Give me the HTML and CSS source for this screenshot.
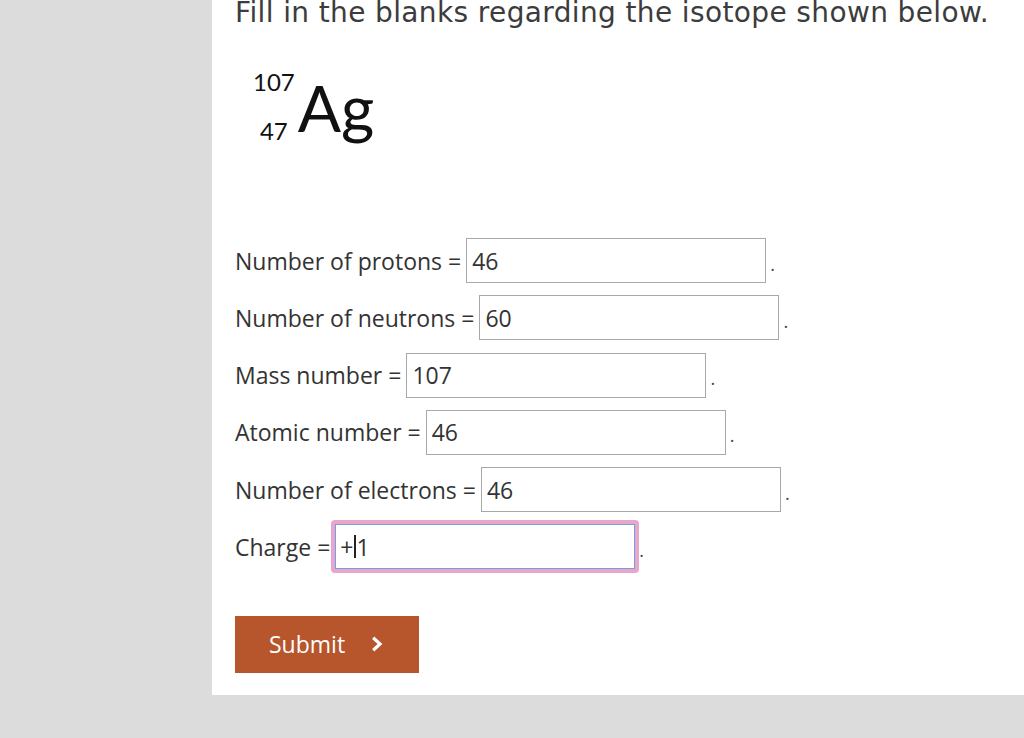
FILE: index.html
```html
<!DOCTYPE html>
<html lang="en">
<head>
<meta charset="utf-8">
<title>Isotope question</title>
<link rel="stylesheet" href="styles.css">
</head>
<body>
<main class="panel">
  <h1 class="title">Fill in the blanks regarding the isotope shown below.</h1>
  <div class="nuclide">
    <div class="indices">
      <span class="mass">107</span>
      <span class="atomic">47</span>
    </div>
    <span class="symbol">Ag</span>
  </div>
  <form class="blanks">
    <div class="row"><span class="label">Number of protons =</span><input class="field" type="text" value="46"><span class="dot">.</span></div>
    <div class="row"><span class="label">Number of neutrons =</span><input class="field" type="text" value="60"><span class="dot">.</span></div>
    <div class="row"><span class="label">Mass number =</span><input class="field" type="text" value="107"><span class="dot">.</span></div>
    <div class="row"><span class="label">Atomic number =</span><input class="field" type="text" value="46"><span class="dot">.</span></div>
    <div class="row"><span class="label">Number of electrons =</span><input class="field" type="text" value="46"><span class="dot">.</span></div>
    <div class="row"><span class="label">Charge =</span><span class="ring"><span class="field focused">+<span class="caret"></span>1</span></span><span class="dot">.</span></div>
    <button class="submit" type="button">Submit
      <svg class="chev" width="12" height="16" viewBox="0 0 12 16"><path d="M2.2 1.8 L9 8 L2.2 14.2" fill="none" stroke="#fff" stroke-width="3.2"/></svg>
    </button>
  </form>
</main>
</body>
</html>
```
FILE: styles.css
```css
html, body {
  margin: 0;
  padding: 0;
}
body {
  background: #dcdcdc;
  height: 738px;
  overflow: hidden;
  font-family: "Open Sans", "Liberation Sans", sans-serif;
  color: #333;
}
.panel {
  margin-left: 212px;
  width: 812px;
  height: 695px;
  background: #fff;
  padding-left: 23px;
  box-sizing: border-box;
  overflow: hidden;
}
.title {
  margin: -4px 0 0 0;
  font-family: "DejaVu Sans", sans-serif;
  font-weight: 400;
  font-size: 28px;
  line-height: 34px;
  color: #3c3c3c;
  white-space: nowrap;
  letter-spacing: 0.37px;
}
.nuclide {
  display: flex;
  align-items: flex-start;
  margin-top: 39px;
  font-family: Lato, "Open Sans", sans-serif;
  color: #111;
}
.indices {
  display: flex;
  flex-direction: column;
  align-items: center;
  gap: 24px;
  margin-left: 18px;
  font-size: 24px;
  line-height: 25px;
}
.symbol {
  font-size: 64px;
  line-height: 66px;
  margin-top: 6px;
  margin-left: 3px;
}
.blanks {
  margin-top: 95px;
  display: flex;
  flex-direction: column;
  align-items: flex-start;
  gap: 12.3px;
}
.row {
  display: flex;
  align-items: center;
  height: 45px;
  font-size: 23px;
}
.label {
  margin-right: 5px;
}
.field {
  box-sizing: border-box;
  width: 300px;
  height: 45px;
  border: 1px solid #a8a8a8;
  border-radius: 0;
  padding: 0 0 0 5px;
  margin: 0;
  font-family: "Open Sans", "Liberation Sans", sans-serif;
  font-size: 23px;
  color: #333;
  background: #fff;
  outline: none;
  display: flex;
  align-items: center;
}
.ring {
  display: block;
  padding: 4px;
  margin: -4px;
  border-radius: 4px;
  background: #eaa6c9;
}
.field.focused {
  border-color: #6fa1e6;
  padding-left: 4px;
}
.caret {
  display: inline-block;
  width: 2px;
  height: 23px;
  background: #222;
  margin: 0 0 0 1px;
}
.dot {
  margin-left: 4px;
  font-size: 18px;
  color: #444;
  align-self: center;
  padding-top: 6px;
}
.submit {
  margin-top: 34px;
  width: 184px;
  height: 57px;
  border: none;
  background: #b7552d;
  color: #fff;
  font-family: "Open Sans", "Liberation Sans", sans-serif;
  font-size: 23px;
  display: flex;
  align-items: center;
  padding: 0 0 0 34px;
  gap: 26px;
  cursor: pointer;
}
.chev {
  display: block;
}
```
